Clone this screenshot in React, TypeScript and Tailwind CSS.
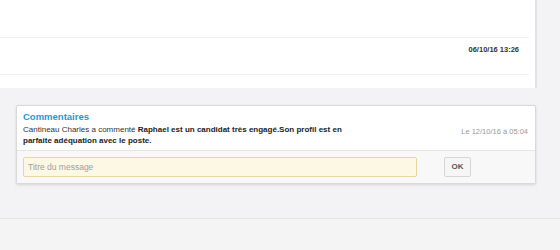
import React from 'react';

const App = () => {
  return (
    <div className="w-[560px] h-[250px] overflow-hidden bg-[#f3f3f5] flex flex-col font-['Liberation_Sans',Arial,sans-serif]">
      {/* Top list panel */}
      <div className="w-[537px] h-[88px] bg-white border-r-2 border-[#e2e2e2] flex flex-col shrink-0">
        <div className="h-[38px] mr-[6px] border-b border-[#efefef]" />
        <div className="h-[37px] mr-[6px] border-b border-[#efefef] flex justify-end pr-[10px] pt-[7px]">
          <span className="text-[7.5px] leading-[9px] font-bold text-[#333]">06/10/16 13:26</span>
        </div>
      </div>

      {/* Comments card */}
      <div className="mt-[17px] ml-[16px] w-[520px] border border-[#d9d9d9] rounded-[2px] bg-white shadow-[0_1px_3px_rgba(0,0,0,0.12)] shrink-0">
        <div className="px-[6px] pt-[5px] pb-[4px]">
          <div className="text-[9.5px] leading-[12px] font-bold text-[#1b9ad8]">Commentaires</div>
          <div className="flex justify-between items-start mt-[2px]">
            <p className="w-[330px] text-[8px] leading-[10.5px] text-[#333]">
              Cantineau Charles a commenté{' '}
              <span className="font-bold text-[#222]">
                Raphael est un candidat très engagé.Son profil est en parfaite adéquation avec le poste.
              </span>
            </p>
            <span className="text-[7.5px] leading-[10.5px] text-[#999] pr-[1px] mt-[2px]">Le 12/10/16 à 05:04</span>
          </div>
        </div>
        <div className="border-t border-[#e5e5e5] bg-[#f8f8f8] px-[6px] pt-[6px] pb-[6px] flex items-center gap-[27px]">
          <input
            className="w-[394px] h-[20px] bg-[#fdf8e3] border border-[#e6d6a0] rounded-[2px] px-[4px] text-[8.5px] text-[#333] placeholder:text-[#a0a0a0] outline-none"
            placeholder="Titre du message"
          />
          <button className="w-[27px] h-[20px] bg-[#f6f6f6] border border-[#d6d6d6] rounded-[2px] text-[8px] font-bold text-[#555]">
            OK
          </button>
        </div>
      </div>

      <div className="flex-1" />
      <div className="h-[32px] border-t border-[#e6e6e6] bg-[#f4f4f4] shrink-0" />
    </div>
  );
};

export default App;
